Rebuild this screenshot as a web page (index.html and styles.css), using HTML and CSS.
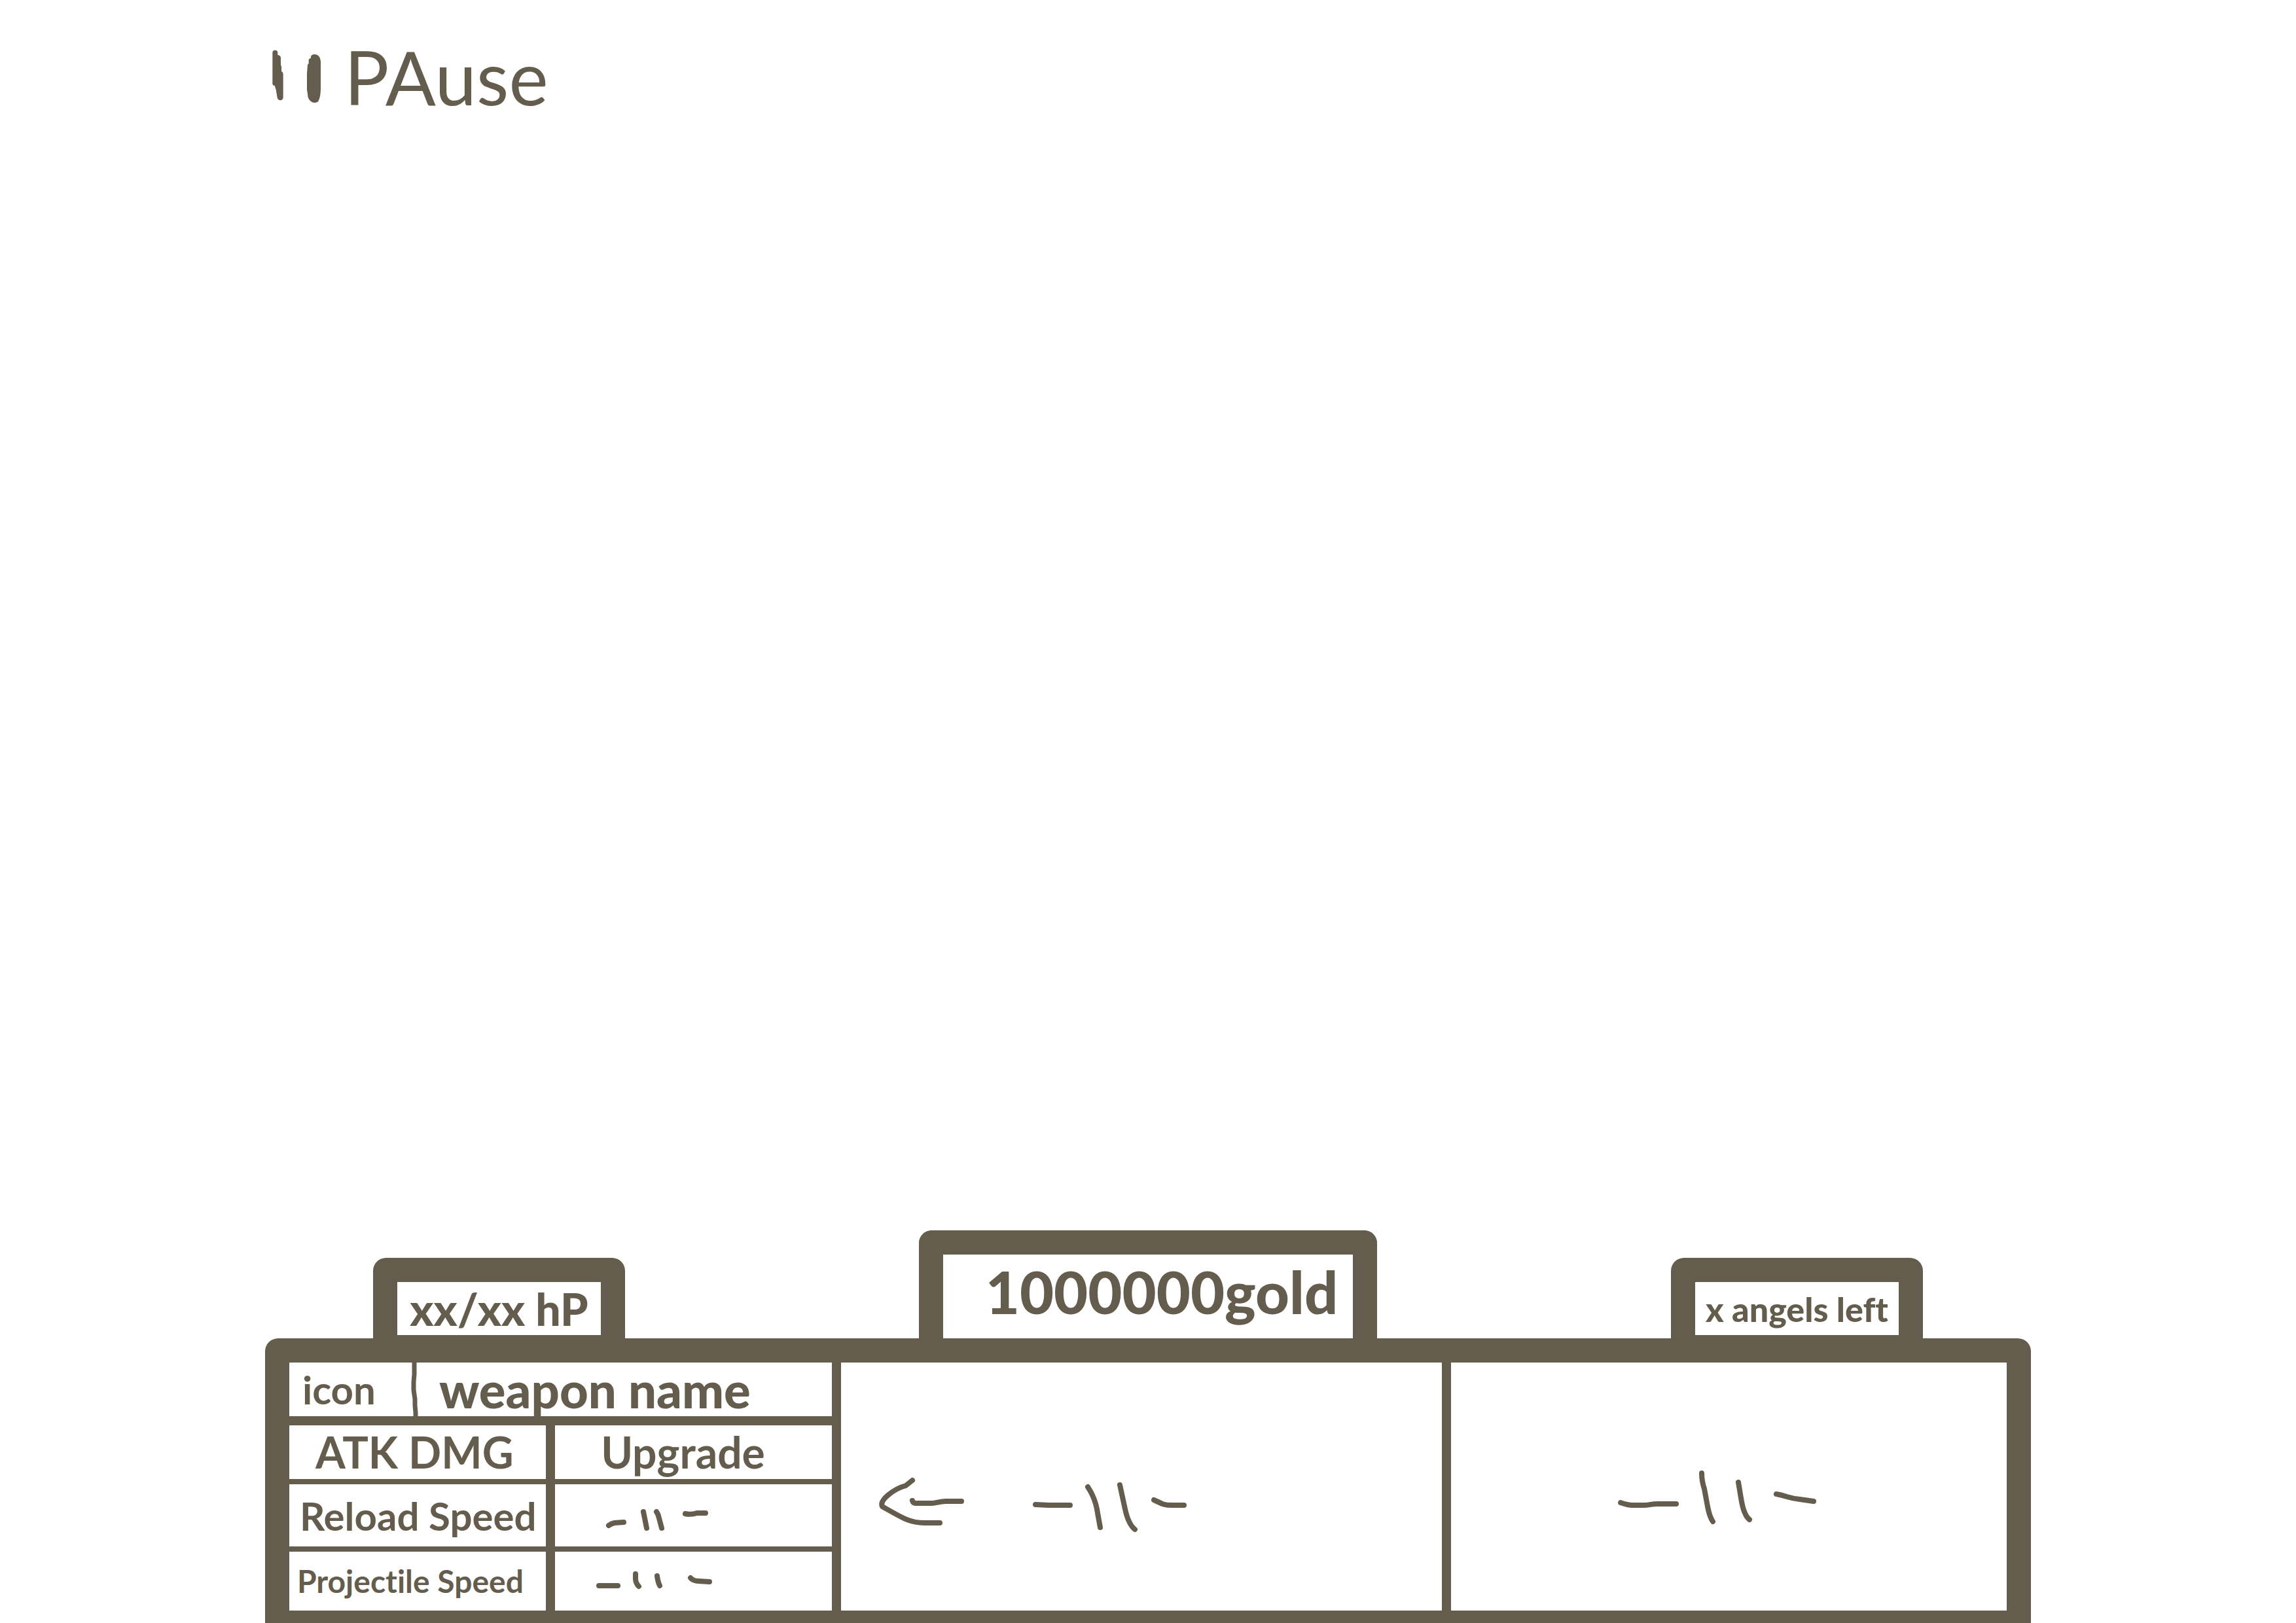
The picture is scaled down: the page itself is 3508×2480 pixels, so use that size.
FILE: index.html
```html
<!DOCTYPE html>
<html lang="en">
<head>
<meta charset="utf-8">
<title>Game HUD</title>
<link rel="stylesheet" href="styles.css">
</head>
<body>
<header class="topbar">
  <button class="pause" type="button">
    <svg class="pause-icon" viewBox="78 60 222 270" aria-hidden="true">
      <path d="M79 86Q79 74 91 74Q103 74 103 86V96Q117 98 117 110V140L120 150V170Q128 175 128 185V292Q126 304 114 304Q103 302 101 292L95 255L89 237Q79 235 79 228Z"/>
      <path d="M256 100Q262 92 274 93Q298 96 300 125V250Q300 290 288 310Q275 319 260 312Q240 300 240 275L237 255V180L240 140L245 135V118Q246 112 254 111Z"/>
    </svg>
    <span>PAuse</span>
  </button>
</header>

<main class="hud">
  <div class="tabs">
    <div class="tab tab-hp">xx/xx hP</div>
    <div class="tab tab-gold">1000000gold</div>
    <div class="tab tab-enemies">x angels left</div>
  </div>

  <div class="panel">
    <section class="weapon">
      <div class="weapon-head">
        <span class="weapon-icon">icon</span>
        <svg class="head-divider" viewBox="0 0 10 82" aria-hidden="true"><path d="M4 -2V18L3 30V42L5 56V66L6 76V84"/></svg>
        <h2 class="weapon-name">weapon name</h2>
      </div>
      <table class="stats">
        <tbody>
          <tr class="row-damage">
            <th scope="row" class="stat stat-caps">ATK DMG</th>
            <td><button class="upgrade" type="button">Upgrade</button></td>
          </tr>
          <tr class="row-reload">
            <th scope="row" class="stat stat-reload">Reload Speed</th>
            <td><button class="upgrade ditto" type="button" aria-label="Upgrade reload speed">
              <svg class="ditto-small" viewBox="910 2285 180 60" aria-hidden="true"><path d="M930 2330Q934 2327 939 2326L953 2325M983 2309L988 2334M1003 2309Q1006 2313 1007 2319L1011 2334M1047 2312Q1055 2314 1065 2311L1078 2311"/></svg>
            </button></td>
          </tr>
          <tr class="row-projectile">
            <th scope="row" class="stat stat-projectile">Projectile Speed</th>
            <td><button class="upgrade ditto" type="button" aria-label="Upgrade projectile speed">
              <svg class="ditto-small" viewBox="910 2386 180 60" aria-hidden="true"><path d="M915 2423H944M971 2405V2412Q971 2419 976 2424M1004 2408Q1005 2417 1008 2423M1055 2411Q1059 2416 1068 2416L1084 2417"/></svg>
            </button></td>
          </tr>
        </tbody>
      </table>
    </section>

    <section class="slot slot-second" aria-label="Second weapon, same as the first">
      <svg class="ditto-arrow" viewBox="1340 2240 480 100" aria-hidden="true"><path d="M1394 2262L1384 2270C1366 2275 1343 2292 1348 2302C1378 2319 1390 2327 1412 2327H1436M1394 2293Q1395 2297 1399 2297H1423C1431 2297 1435 2294 1445 2294H1469M1582 2299L1602 2300H1635M1662 2272Q1674 2290 1677 2312L1681 2334M1711 2269L1719 2306Q1724 2329 1734 2337M1763 2292L1776 2298Q1782 2300 1790 2300H1809"/></svg>
    </section>

    <section class="slot slot-third" aria-label="Third weapon, same as the first">
      <svg class="ditto-large" viewBox="2466 2240 320 100" aria-hidden="true"><path d="M2476 2296Q2487 2300 2494 2300H2511C2520 2300 2522 2298 2533 2298H2561M2600 2251Q2600 2263 2604 2275L2609 2302Q2612 2318 2617 2325M2656 2265L2660 2289Q2664 2315 2673 2322M2714 2283Q2721 2284 2730 2287Q2740 2290 2750 2291L2771 2294"/></svg>
    </section>
  </div>
</main>
</body>
</html>
```
FILE: styles.css
```css
:root {
  --ink: #645d4e;
  --paper: #fff;
}

* {
  box-sizing: border-box;
}

body {
  margin: 0;
  min-height: 100vh;
  display: flex;
  flex-direction: column;
  justify-content: space-between;
  background: var(--paper);
  color: var(--ink);
  font-family: Lato, "Open Sans", sans-serif;
  font-variant-ligatures: none;
}

button {
  border: 0;
  padding: 0;
  background: none;
  color: inherit;
  font: inherit;
  cursor: pointer;
}

svg {
  flex: none;
  overflow: visible;
  fill: none;
  stroke: var(--ink);
  stroke-width: 8;
  stroke-linecap: round;
  stroke-linejoin: round;
}

/* Top bar */
.topbar {
  padding: 62px 416px 0;
}

.pause {
  display: flex;
  align-items: center;
  gap: 36px;
  font-size: 114px;
  line-height: 110px;
}

.pause-icon {
  width: 74px;
  height: 90px;
  fill: var(--ink);
  stroke: none;
}

/* Bottom HUD */
.hud {
  padding: 0 405px;
}

.tabs {
  display: flex;
  justify-content: space-between;
  align-items: flex-end;
  padding: 0 165px;
}

.tab {
  display: flex;
  justify-content: center;
  align-items: center;
  width: 385px;
  height: 123px;
  border: 37px solid var(--ink);
  border-bottom-width: 5px;
  border-radius: 20px 20px 0 0;
  font-weight: 900;
  white-space: nowrap;
}

.tab-hp {
  font-size: 68px;
}

.tab-gold {
  width: 700px;
  height: 165px;
  border-bottom-width: 0;
  padding: 0 0 16px 42px;
  font-size: 90px;
}

.tab-enemies {
  font-size: 52px;
}

.panel {
  display: grid;
  grid-template-columns: 829fr 918fr 849fr;
  gap: 14px;
  border: 37px solid var(--ink);
  border-bottom-width: 19px;
  border-radius: 20px 20px 0 0;
  background: var(--ink);
}

.weapon {
  display: flex;
  flex-direction: column;
  gap: 14px;
}

.weapon-head {
  display: flex;
  align-items: center;
  height: 82px;
  background: var(--paper);
}

.weapon-icon {
  width: 187px;
  padding-left: 20px;
  font-size: 60px;
  line-height: 76px;
  font-weight: 700;
}

.head-divider {
  width: 10px;
  height: 82px;
  stroke-width: 7;
  stroke-linecap: butt;
}

.weapon-name {
  margin: 0;
  padding-left: 32px;
  font-size: 76px;
  line-height: 76px;
  font-weight: 900;
}

.stats {
  width: 100%;
  border-collapse: separate;
  border-spacing: 0;
  table-layout: fixed;
}

.stats th,
.stats td {
  padding: 0;
  background: var(--paper);
  text-align: left;
  white-space: nowrap;
}

.stats th {
  width: 49%;
  border-right: 14px solid var(--ink);
}

.row-damage {
  height: 82px;
}

.row-reload {
  height: 103px;
}

.row-projectile {
  height: 98px;
}

.row-reload > *,
.row-projectile > * {
  border-top: 8px solid var(--ink);
}

.stat {
  font-weight: 700;
}

.stats .stat-caps {
  padding-left: 40px;
  font-size: 66px;
  line-height: 72px;
}

.stats .stat-reload {
  padding-left: 16px;
  font-size: 60px;
  line-height: 72px;
}

.stats .stat-projectile {
  padding-left: 12px;
  font-size: 48px;
  line-height: 72px;
}

.upgrade {
  display: block;
  width: 100%;
  padding-left: 70px;
  text-align: left;
  font-size: 66px;
  line-height: 72px;
  font-weight: 700;
}

.ditto {
  display: flex;
  padding-left: 62px;
}

.ditto-small {
  width: 180px;
  height: 60px;
}

.slot {
  padding-top: 158px;
  background: var(--paper);
}

.slot-second {
  padding-left: 55px;
}

.slot-third {
  padding-left: 249px;
}

.ditto-arrow {
  width: 480px;
  height: 100px;
}

.ditto-large {
  width: 320px;
  height: 100px;
}
```
